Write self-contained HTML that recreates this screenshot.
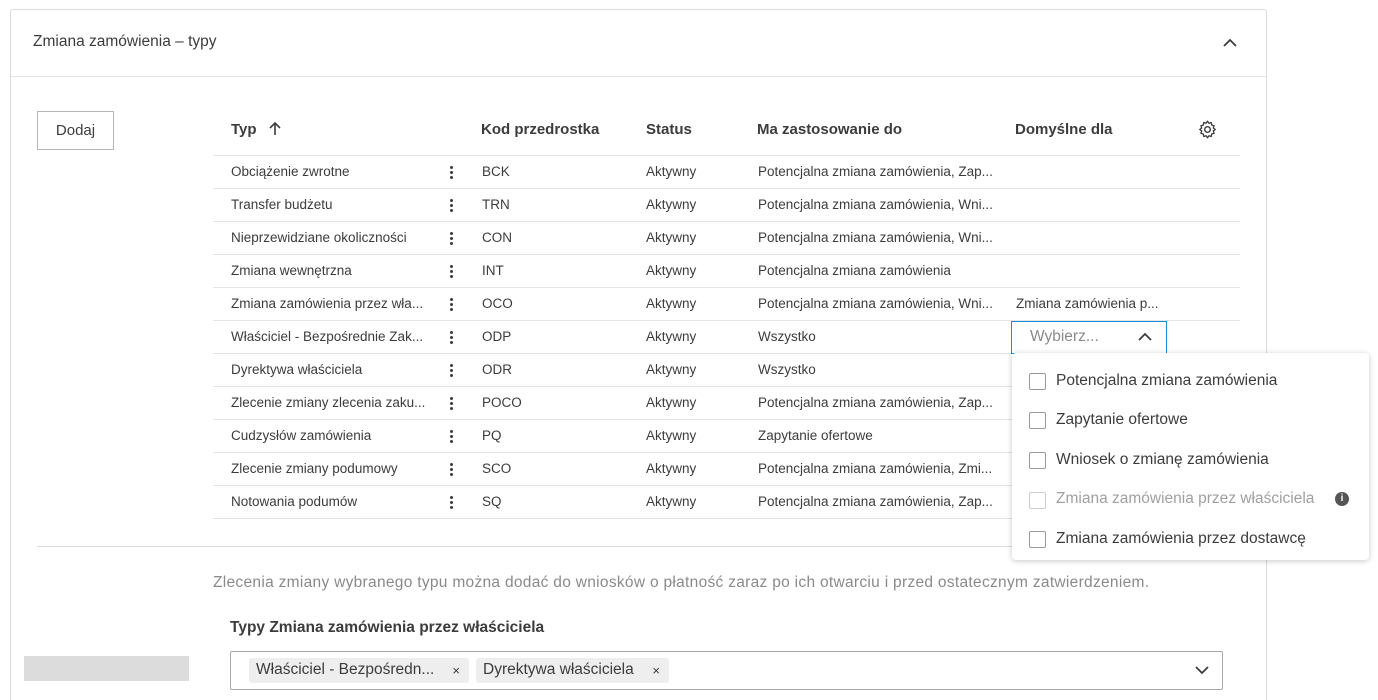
<!DOCTYPE html>
<html><head><meta charset="utf-8"><style>
*{margin:0;padding:0;box-sizing:border-box}
html,body{width:1378px;height:700px;overflow:hidden}
body{background:#fff;font-family:"Liberation Sans",sans-serif;color:#3c3c3c;position:relative}
.a{position:absolute;white-space:nowrap}
.card{position:absolute;left:10px;top:9px;width:1257px;height:720px;border:1px solid #dcdcdc;border-radius:3px}
.hl{position:absolute;height:1px;background:#e4e4e4}
.t{font-size:13.5px;color:#3c3c3c}
.h{font-size:15px;font-weight:bold;color:#3c3c3c}
.dots{position:absolute;width:3px}
.dots i{display:block;width:3px;height:3px;border-radius:50%;background:#3c3c3c;margin-bottom:2px}
.cb{position:absolute;width:17px;height:17px;border:1px solid #999;border-radius:2px;background:#fff}
.o{font-size:15.5px;color:#3c3c3c}
</style></head><body>
<div class="card"></div>
<div class="hl" style="left:11px;top:76px;width:1255px"></div>
<div class="a" style="left:33px;top:33px;font-size:15.5px">Zmiana zamówienia – typy</div>
<svg class="a" style="left:1222px;top:37px" width="16" height="12"><path d="M2 9 L8 3 L14 9" fill="none" stroke="#3c3c3c" stroke-width="1.8"/></svg>
<div class="a" style="left:37px;top:111px;width:77px;height:39px;border:1px solid #b5b5b5;font-size:15px;display:flex;align-items:center;justify-content:center">Dodaj</div>
<div class="a h" style="left:231px;top:121px">Typ</div>
<svg class="a" style="left:267px;top:121px" width="16" height="16"><path d="M8 14V2 M3 7 L8 2 L13 7" fill="none" stroke="#3c3c3c" stroke-width="1.6"/></svg>
<div class="a h" style="left:481px;top:121px">Kod przedrostka</div>
<div class="a h" style="left:646px;top:121px">Status</div>
<div class="a h" style="left:757px;top:121px">Ma zastosowanie do</div>
<div class="a h" style="left:1015px;top:121px">Domyślne dla</div>
<svg class="a" style="left:1197px;top:119px" width="21" height="21" viewBox="0 0 24 24"><circle cx="12" cy="12" r="3.2" fill="none" stroke="#3c3c3c" stroke-width="1.6"/><path d="M12 2.5l1.6 2.3 2.7-.8.5 2.8 2.7.9-.9 2.7 2.3 1.6-2.3 1.6.9 2.7-2.7.9-.5 2.8-2.7-.8L12 21.5l-1.6-2.3-2.7.8-.5-2.8-2.7-.9.9-2.7L3.1 12l2.3-1.6-.9-2.7 2.7-.9.5-2.8 2.7.8z" fill="none" stroke="#3c3c3c" stroke-width="1.5" stroke-linejoin="round"/></svg>
<div id="rows"></div>
<div class="hl" style="left:37px;top:546px;width:1203px;background:#dcdcdc"></div>
<div class="a" style="left:213px;top:574px;font-size:15.5px;letter-spacing:0.3px;color:#8a8a8a">Zlecenia zmiany wybranego typu można dodać do wniosków o płatność zaraz po ich otwarciu i przed ostatecznym zatwierdzeniem.</div>
<div class="a" style="left:230px;top:619px;font-size:15.5px;font-weight:bold">Typy Zmiana zamówienia przez właściciela</div>
<div class="a" style="left:24px;top:656px;width:165px;height:25px;background:#dcdcdc"></div>
<div class="a" style="left:0;top:625px;width:10px;height:75px;background:#fff"></div>
<div class="a" style="left:230px;top:651px;width:993px;height:39px;border:1px solid #a8a8a8;border-radius:2px"></div>
<div class="a" style="left:249px;top:658px;width:220px;height:25px;background:#eeeeee;border-radius:3px;padding:3px 7px;font-size:15.5px">Właściciel - Bezpośredn... <span style="font-size:13px;position:absolute;right:9px;top:5px">×</span></div>
<div class="a" style="left:476px;top:658px;width:193px;height:25px;background:#eeeeee;border-radius:3px;padding:3px 7px;font-size:15.5px">Dyrektywa właściciela <span style="font-size:13px;position:absolute;right:9px;top:5px">×</span></div>
<svg class="a" style="left:1194px;top:664px" width="16" height="12"><path d="M2 3 L8 9 L14 3" fill="none" stroke="#3c3c3c" stroke-width="1.8"/></svg>
<div class="a" style="left:1011px;top:321px;width:156px;height:33px;border:1.5px solid #1a8fd6;background:#fff"></div>
<div class="a" style="left:1030px;top:328px;font-size:15.5px;color:#8a8a8a">Wybierz...</div>
<svg class="a" style="left:1137px;top:331px" width="16" height="12"><path d="M2 9 L8 3 L14 9" fill="none" stroke="#3c3c3c" stroke-width="1.8"/></svg>
<div class="a" style="left:1012px;top:353px;width:357px;height:207px;background:#fff;border-radius:4px;box-shadow:0 1px 6px rgba(0,0,0,.22)"></div>
<div class="cb" style="left:1029px;top:373px"></div><div class="a o" style="left:1056px;top:372px">Potencjalna zmiana zamówienia</div>
<div class="cb" style="left:1029px;top:412px"></div><div class="a o" style="left:1056px;top:411px">Zapytanie ofertowe</div>
<div class="cb" style="left:1029px;top:452px"></div><div class="a o" style="left:1056px;top:451px">Wniosek o zmianę zamówienia</div>
<div class="cb" style="left:1029px;top:492px;border-color:#ccc"></div><div class="a o" style="left:1056px;top:490px;color:#a0a0a0">Zmiana zamówienia przez właściciela</div>
<div class="a" style="left:1335px;top:492px;width:14px;height:14px;border-radius:50%;background:#555;color:#fff;font-size:10px;font-weight:bold;text-align:center;line-height:14px">i</div>
<div class="cb" style="left:1029px;top:531px"></div><div class="a o" style="left:1056px;top:530px">Zmiana zamówienia przez dostawcę</div>
<script>
var d=[["Obciążenie zwrotne","BCK","Potencjalna zmiana zamówienia, Zap...",""],
["Transfer budżetu","TRN","Potencjalna zmiana zamówienia, Wni...",""],
["Nieprzewidziane okoliczności","CON","Potencjalna zmiana zamówienia, Wni...",""],
["Zmiana wewnętrzna","INT","Potencjalna zmiana zamówienia",""],
["Zmiana zamówienia przez wła...","OCO","Potencjalna zmiana zamówienia, Wni...","Zmiana zamówienia p..."],
["Właściciel - Bezpośrednie Zak...","ODP","Wszystko",""],
["Dyrektywa właściciela","ODR","Wszystko",""],
["Zlecenie zmiany zlecenia zaku...","POCO","Potencjalna zmiana zamówienia, Zap...",""],
["Cudzysłów zamówienia","PQ","Zapytanie ofertowe",""],
["Zlecenie zmiany podumowy","SCO","Potencjalna zmiana zamówienia, Zmi...",""],
["Notowania podumów","SQ","Potencjalna zmiana zamówienia, Zap...",""]];
var h='<div class="hl" style="left:213px;top:155px;width:1027px"></div>';
d.forEach(function(r,i){var y=155+i*33;
h+='<div class="a t" style="left:231px;top:'+(y+9)+'px">'+r[0]+'</div>';
h+='<div class="dots" style="left:450px;top:'+(y+11)+'px"><i></i><i></i><i></i></div>';
h+='<div class="a t" style="left:482px;top:'+(y+9)+'px">'+r[1]+'</div>';
h+='<div class="a t" style="left:646px;top:'+(y+9)+'px">Aktywny</div>';
h+='<div class="a t" style="left:758px;top:'+(y+9)+'px">'+r[2]+'</div>';
h+='<div class="a t" style="left:1016px;top:'+(y+9)+'px">'+r[3]+'</div>';
h+='<div class="hl" style="left:213px;top:'+(y+33)+'px;width:1027px"></div>';});
document.getElementById('rows').innerHTML=h;
</script>
</body></html>
